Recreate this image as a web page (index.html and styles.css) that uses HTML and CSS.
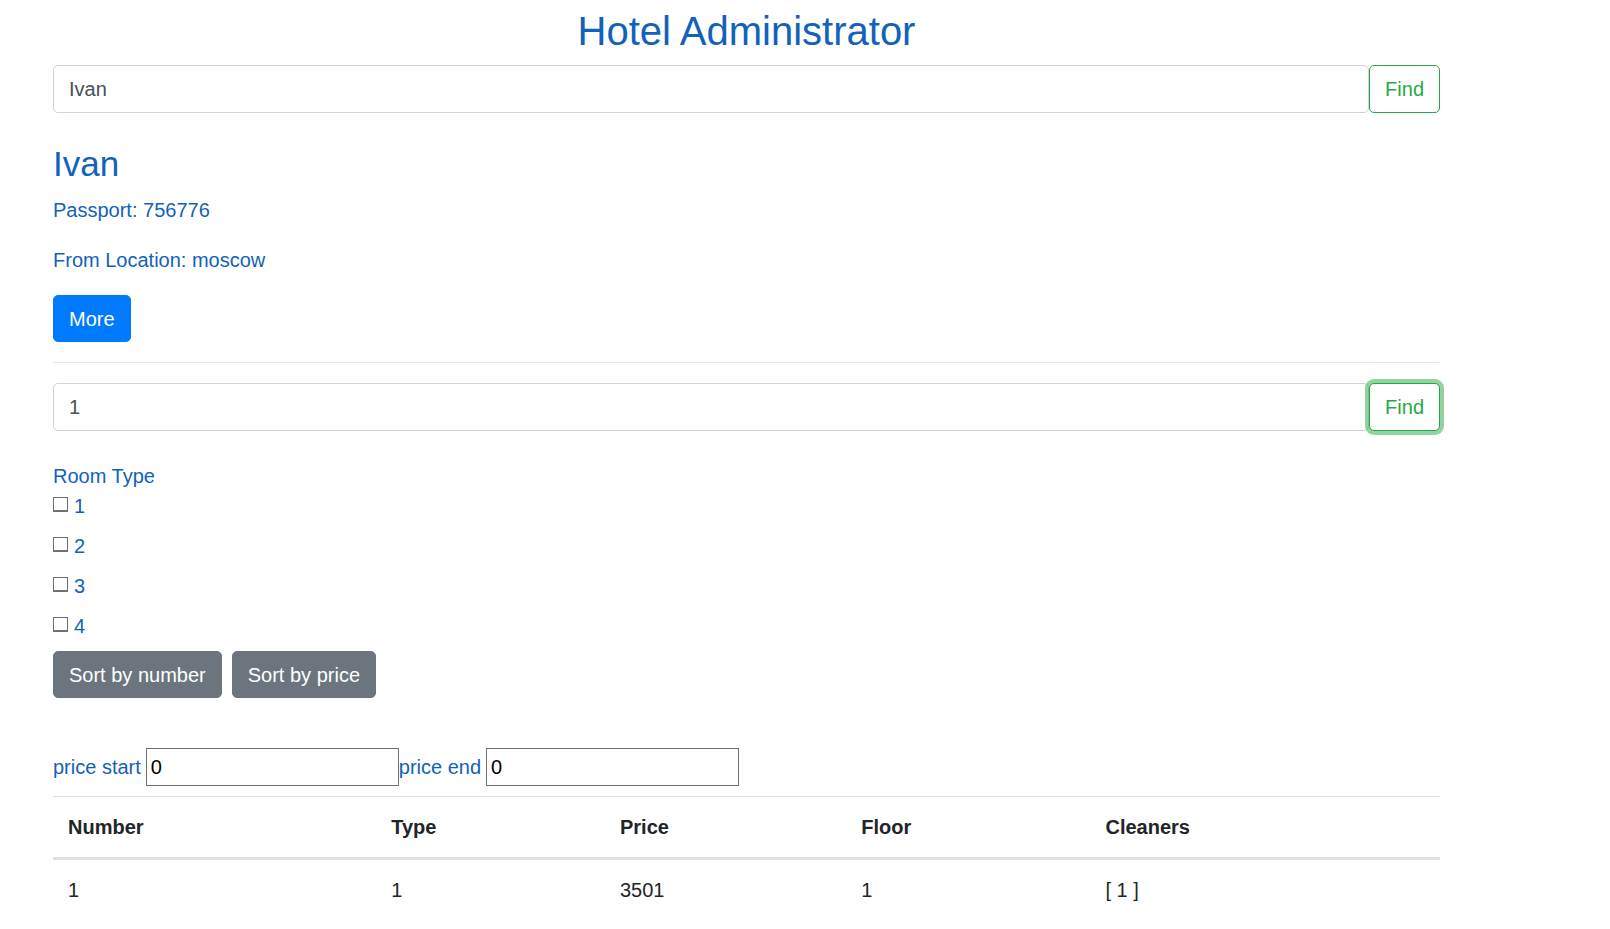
FILE: index.html
```
<!DOCTYPE html>
<html lang="en">
<head>
<meta charset="utf-8">
<title>Hotel Administrator</title>
<link rel="stylesheet" href="styles.css">
</head>
<body>
<main class="page">
  <h1 class="title">Hotel Administrator</h1>

  <form class="search">
    <input class="search-input" type="text" value="Ivan" aria-label="Guest name">
    <button class="btn btn-find" type="button">Find</button>
  </form>

  <section class="guest">
    <h2 class="guest-name">Ivan</h2>
    <p class="guest-line">Passport: 756776</p>
    <p class="guest-line">From Location: moscow</p>
    <button class="btn btn-more" type="button">More</button>
  </section>

  <hr class="divider">

  <form class="search">
    <input class="search-input" type="text" value="1" aria-label="Room number">
    <button class="btn btn-find is-focused" type="button">Find</button>
  </form>

  <fieldset class="types">
    <legend class="types-title">Room Type</legend>
    <label class="check"><input class="check-box" type="checkbox">1</label>
    <label class="check"><input class="check-box" type="checkbox">2</label>
    <label class="check"><input class="check-box" type="checkbox">3</label>
    <label class="check"><input class="check-box" type="checkbox">4</label>
  </fieldset>

  <div class="sorting">
    <button class="btn btn-sort" type="button">Sort by number</button>
    <button class="btn btn-sort" type="button">Sort by price</button>
  </div>

  <div class="prices">
    <label class="price">price start <input class="price-input" type="text" value="0"></label>
    <label class="price">price end <input class="price-input" type="text" value="0"></label>
  </div>

  <table class="rooms">
    <colgroup>
      <col class="col-number"><col class="col-type"><col class="col-price"><col class="col-floor"><col>
    </colgroup>
    <thead>
      <tr><th scope="col">Number</th><th scope="col">Type</th><th scope="col">Price</th><th scope="col">Floor</th><th scope="col">Cleaners</th></tr>
    </thead>
    <tbody>
      <tr><td>1</td><td>1</td><td>3501</td><td>1</td><td>[ 1 ]</td></tr>
    </tbody>
  </table>
</main>
</body>
</html>
```
FILE: styles.css
```
* {
  box-sizing: border-box;
}

body {
  margin: 0;
  background: #fff;
  color: #1262bb;
  font-family: "Liberation Sans", Arial, sans-serif;
  font-size: 20px;
  line-height: 30px;
}

input,
button {
  font: inherit;
}

.page {
  padding: 7px 170px 0 53px;
}

.title {
  margin: 0 0 10px;
  font-size: 40px;
  font-weight: 400;
  line-height: 48px;
  text-align: center;
}

.search {
  display: flex;
  margin-bottom: 30px;
}

.search-input {
  flex: 1;
  min-width: 0;
  height: 48px;
  padding: 7px 15px;
  border: 1px solid #ced4da;
  border-radius: 5px;
  background: #fff;
  color: #495057;
}

.btn {
  min-height: 47px;
  padding: 7px 15px;
  border: 1px solid transparent;
  border-radius: 5px;
}

.btn-find {
  border-color: #28a745;
  background: #fff;
  color: #28a745;
}

.is-focused {
  box-shadow: 0 0 0 4px rgba(40, 167, 69, 0.5);
}

.guest-name {
  margin: 0 0 10px;
  font-size: 35px;
  font-weight: 400;
  line-height: 42px;
}

.guest-line {
  margin: 0 0 20px;
}

.btn-more {
  display: block;
  border-color: #007bff;
  background: #007bff;
  color: #fff;
}

.divider {
  margin: 20px 0;
  border: 0;
  border-top: 1px solid #e5e5e5;
}

.types {
  display: flex;
  flex-direction: column;
  align-items: flex-start;
  gap: 10px;
  margin: 0 0 10px;
  padding: 0;
  border: 0;
}

.types-title {
  padding: 0;
}

.check {
  display: flex;
  align-items: flex-start;
  gap: 6px;
}

.check-box {
  appearance: none;
  width: 15px;
  height: 15px;
  margin: 6px 0 0;
  border: 1px solid #707070;
  border-bottom-width: 2px;
  background: #fff;
}

.sorting {
  display: flex;
  gap: 10px;
  margin-bottom: 50px;
}

.btn-sort {
  border-color: #6c757d;
  background: #6c757d;
  color: #fff;
}

.prices {
  display: flex;
  margin-bottom: 10px;
}

.price {
  display: flex;
  align-items: center;
  gap: 5px;
}

.price-input {
  width: 253px;
  height: 38px;
  padding: 3px 4px;
  border: 1px solid #707070;
  background: #fff;
  color: #000;
}

.rooms {
  width: 100%;
  border-collapse: separate;
  border-spacing: 0;
  table-layout: fixed;
  color: #212529;
}

.rooms th,
.rooms td {
  padding: 15px;
  text-align: left;
}

.rooms th {
  border-top: 1px solid #dee2e6;
  border-bottom: 3px solid #dee2e6;
}

.col-number {
  width: 23.3%;
}

.col-type {
  width: 16.5%;
}

.col-price {
  width: 17.4%;
}

.col-floor {
  width: 17.6%;
}
```
